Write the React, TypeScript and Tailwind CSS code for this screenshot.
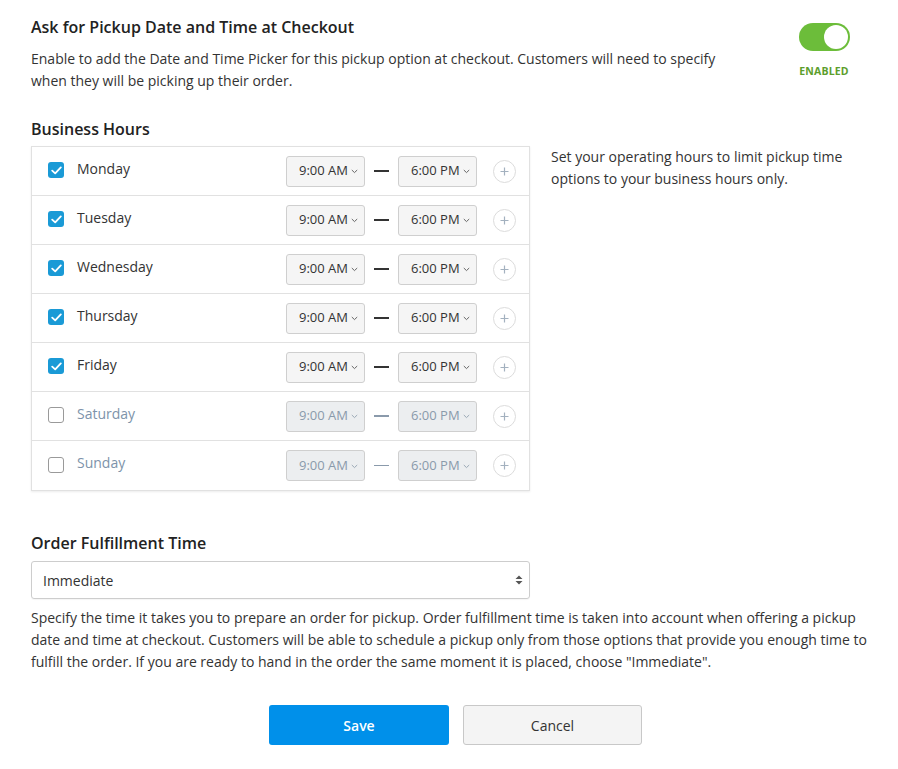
import { useState } from 'react';

const days = [
  { name: 'Monday', on: true },
  { name: 'Tuesday', on: true },
  { name: 'Wednesday', on: true },
  { name: 'Thursday', on: true },
  { name: 'Friday', on: true },
  { name: 'Saturday', on: false },
  { name: 'Sunday', on: false },
];

const Chevron = ({ muted }: { muted: boolean }) => (
  <svg width="7" height="5" viewBox="0 0 7 5" className="ml-[3px] mt-[1px]">
    <path d="M0.8 1 L3.5 3.6 L6.2 1" fill="none" stroke={muted ? '#9aa8b5' : '#666'} strokeWidth="1" />
  </svg>
);

const TimeSelect = ({ value, muted }: { value: string; muted: boolean }) => (
  <div
    className={`flex h-[31px] w-[79px] items-center pl-[12px] rounded-[3px] border border-[#cfcfcf] text-[13px] ${
      muted ? 'bg-[#eceef0] text-[#8a9aab]' : 'bg-[#f5f5f5] text-[#333]'
    }`}
  >
    {value}
    <Chevron muted={muted} />
  </div>
);

const DayRow = ({ name, on, last }: { name: string; on: boolean; last: boolean }) => (
  <div className={`flex h-[49px] items-center pl-[16px] pr-[13px] ${last ? '' : 'border-b border-[#e1e1e1]'}`}>
    {on ? (
      <span className="mb-[2px] flex h-[16px] w-[16px] items-center justify-center rounded-[3px] bg-[#1a9ad6]">
        <svg width="11" height="9" viewBox="0 0 11 9">
          <path d="M1.2 4.6 L4.2 7.4 L9.8 1.4" fill="none" stroke="#fff" strokeWidth="1.8" strokeLinecap="round" strokeLinejoin="round" />
        </svg>
      </span>
    ) : (
      <span className="mb-[2px] h-[16px] w-[16px] rounded-[3px] border border-[#9a9a9a] bg-white" />
    )}
    <span className={`mb-[6px] ml-[13px] flex-1 text-[14px] ${on ? 'text-[#333]' : 'text-[#7d93aa]'}`}>{name}</span>
    <TimeSelect value="9:00 AM" muted={!on} />
    <span className={`mx-[9px] h-[1.5px] w-[15px] ${on ? 'bg-[#333]' : 'bg-[#8a9aab]'}`} />
    <TimeSelect value="6:00 PM" muted={!on} />
    <span className="ml-[16px] flex h-[23px] w-[23px] items-center justify-center rounded-full border border-[#dcdcdc]">
      <svg width="9" height="9" viewBox="0 0 9 9">
        <path d="M4.5 0.5 V8.5 M0.5 4.5 H8.5" stroke="#a3b1bf" strokeWidth="1.2" />
      </svg>
    </span>
  </div>
);

export default function App() {
  const [enabled, setEnabled] = useState(true);

  return (
    <div className="min-h-screen bg-white pl-[31px] pt-[16px] text-[#333]" style={{ fontFamily: '"Open Sans", sans-serif' }}>
      <div className="flex">
        <div className="w-[700px]">
          <h2 className="text-[16px] font-semibold leading-[22px] text-[#222]">Ask for Pickup Date and Time at Checkout</h2>
          <p className="mt-[10px] text-[14px] leading-[22px]">
            Enable to add the Date and Time Picker for this pickup option at checkout. Customers will need to specify when they will
            be picking up their order.
          </p>
        </div>
        <div className="ml-auto mr-[35px] mt-[7px] flex w-[78px] flex-col items-center">
          <button
            onClick={() => setEnabled(!enabled)}
            className={`flex h-[28px] w-[51px] items-center rounded-full p-[2px] ${enabled ? 'justify-end bg-[#6cbd3a]' : 'justify-start bg-[#ccc]'}`}
          >
            <span className="h-[24px] w-[24px] rounded-full bg-white" />
          </button>
          <span className="mt-[13px] text-[10.5px] font-bold leading-[14px] tracking-[0.2px] text-[#5c9e2c]">ENABLED</span>
        </div>
      </div>

      <h3 className="mt-[26px] text-[16px] font-semibold leading-[22px] text-[#222]">Business Hours</h3>
      <div className="mt-[6px] flex items-start">
        <div className="w-[499px] border border-[#e1e1e1] bg-white shadow-[0_1px_2px_rgba(0,0,0,0.08)]">
          {days.map((d, i) => (
            <DayRow key={d.name} name={d.name} on={d.on} last={i === days.length - 1} />
          ))}
        </div>
        <p className="ml-[21px] w-[300px] text-[14px] leading-[22px]">
          Set your operating hours to limit pickup time options to your business hours only.
        </p>
      </div>

      <h3 className="mt-[41px] text-[16px] font-semibold leading-[22px] text-[#222]">Order Fulfillment Time</h3>
      <div className="mt-[7px] flex h-[38px] w-[499px] items-center justify-between rounded-[3px] border border-[#cdcdcd] pl-[11px] pr-[6px] text-[14px] shadow-[0_1px_1px_rgba(0,0,0,0.04)]">
        <span>Immediate</span>
        <svg width="8" height="12" viewBox="0 0 8 12">
          <path d="M4 1.5 L7.5 5 H0.5 Z M4 10.5 L7.5 7 H0.5 Z" fill="#555" />
        </svg>
      </div>
      <p className="mt-[8px] w-[845px] text-[14px] leading-[22px]">
        Specify the time it takes you to prepare an order for pickup. Order fulfillment time is taken into account when offering a
        pickup date and time at checkout. Customers will be able to schedule a pickup only from those options that provide you
        enough time to fulfill the order. If you are ready to hand in the order the same moment it is placed, choose "Immediate".
      </p>

      <div className="mt-[32px] flex gap-[14px] pl-[238px]">
        <button className="h-[40px] w-[180px] rounded-[3px] bg-[#0090ea] text-[14px] font-semibold text-white">Save</button>
        <button className="h-[40px] w-[179px] rounded-[3px] border border-[#c8c8c8] bg-[#f4f4f4] text-[14px] text-[#333]">Cancel</button>
      </div>
    </div>
  );
}
